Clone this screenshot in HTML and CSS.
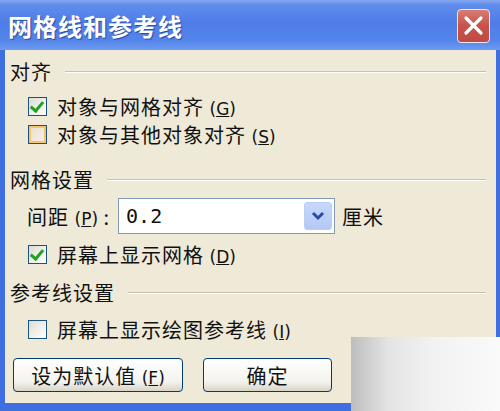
FILE: index.html
```html
<!DOCTYPE html>
<html lang="zh-CN">
<head>
    <meta charset="UTF-8">
    <title>网格线和参考线</title>
    <link rel="stylesheet" href="styles.css">
</head>
<body>

    <div class="window">
        <!-- Title bar -->
        <div class="titlebar">
            <span class="title">网格线和参考线</span>
            <div class="close-btn">
                <svg width="21" height="21" viewBox="0 0 21 21">
                    <path d="M3 3 L18 18 M18 3 L3 18" stroke="#fff" stroke-width="3.2" stroke-linecap="round"/>
                </svg>
            </div>
        </div>

        <!-- Client area -->
        <div class="client">
            <div class="group-head first">对齐</div>

            <div class="check-row row-a">
                <span class="box checked"></span>
                <span class="label">对象与网格对齐 <span class="key">(<u>G</u>)</span></span>
            </div>
            <div class="check-row row-b">
                <span class="box hover"></span>
                <span class="label">对象与其他对象对齐 <span class="key">(<u>S</u>)</span></span>
            </div>

            <div class="group-head second">网格设置</div>

            <div class="spacing-row">
                <span class="label">间距 <span class="key">(<u>P</u>)</span> :</span>
                <div class="combo">
                    <span class="combo-value">0.2</span>
                    <span class="combo-btn">
                        <svg width="16" height="12" viewBox="0 0 16 12">
                            <path d="M3 3 L8 8 L13 3" stroke="#2d4aa8" stroke-width="3" fill="none"/>
                        </svg>
                    </span>
                </div>
                <span class="unit">厘米</span>
            </div>

            <div class="check-row row-c">
                <span class="box checked"></span>
                <span class="label">屏幕上显示网格 <span class="key">(<u>D</u>)</span></span>
            </div>

            <div class="group-head third">参考线设置</div>

            <div class="check-row row-d">
                <span class="box"></span>
                <span class="label">屏幕上显示绘图参考线 <span class="key">(<u>I</u>)</span></span>
            </div>

            <div class="buttons">
                <button class="btn btn-default">设为默认值 <span class="key">(<u>F</u>)</span></button>
                <button class="btn btn-ok">确定</button>
            </div>
        </div>

        <!-- watermark smudge in the corner of the picture -->
        <div class="smudge"></div>
    </div>

</body>
</html>
```

FILE: styles.css
```css
/* Basic Reset */
html, body {
    margin: 0;
    padding: 0;
    width: 500px;
    height: 411px;
    overflow: hidden;
    font-family: "Noto Sans CJK SC", "Noto Sans", sans-serif;
}

/* Window frame */
.window {
    position: relative;
    width: 500px;
    height: 411px;
    box-sizing: border-box;
    display: flex;
    flex-direction: column;
    background: #3f6fe0;
}

/* Title bar */
.titlebar {
    height: 50px;
    flex: 0 0 50px;
    display: flex;
    align-items: center;
    justify-content: space-between;
    padding: 0 10px 0 8px;
    background: linear-gradient(180deg, #86a9f2 0%, #5f8cec 10%, #4f7de8 45%, #5284ea 80%, #6f9af0 100%);
}

.title {
    color: #fff;
    font-size: 24px;
    font-weight: bold;
    letter-spacing: 1px;
    text-shadow: 1px 1px 1px #2a4aa0;
}

.close-btn {
    width: 31px;
    height: 32px;
    margin-top: 1px;
    border: 1px solid #e8e8f4;
    border-radius: 4px;
    background: linear-gradient(180deg, #d87c74 0%, #c9524a 50%, #c04a44 100%);
    display: flex;
    align-items: center;
    justify-content: center;
}

/* Client area */
.client {
    flex: 1;
    margin: 0 4px 8px 5px;
    padding: 11px 10px 0 5px;
    background: #efe9d8;
    color: #111;
    font-size: 20px;
    letter-spacing: 1px;
}

.group-head {
    height: 22px;
    line-height: 22px;
    display: flex;
    align-items: center;
    gap: 13px;
}

.group-head::after {
    content: "";
    flex: 1;
    height: 1px;
    background: #c8c2ad;
    border-bottom: 1px solid #fff;
}

.group-head.second { margin-top: 24px; }
.group-head.third { margin-top: 17px; }

/* Checkbox rows */
.check-row {
    height: 22px;
    display: flex;
    align-items: center;
    padding-left: 18px;
}

.row-a { margin-top: 12px; }
.row-b { margin-top: 6px; }
.row-c { margin-top: 8px; }
.row-d { margin-top: 14px; }

.box {
    position: relative;
    width: 17px;
    height: 17px;
    border: 1px solid #1c5180;
    background: linear-gradient(135deg, #dcdcd6 0%, #f2f2ee 60%, #fff 100%);
    margin-right: 10px;
    flex: 0 0 auto;
}

.box.hover {
    box-shadow: inset 0 0 0 2px #f6c46a;
    background: linear-gradient(135deg, #e8e0d0 0%, #f6f0e6 100%);
}

.box.checked::after {
    content: "";
    position: absolute;
    left: 4px;
    top: 1px;
    width: 5px;
    height: 10px;
    border: solid #21a121;
    border-width: 0 3px 3px 0;
    transform: rotate(40deg);
}

.key {
    font-family: "DejaVu Sans", sans-serif;
    font-size: 17px;
    letter-spacing: 0;
}

/* Spacing combo row */
.spacing-row {
    margin-top: 6px;
    height: 38px;
    display: flex;
    align-items: center;
    padding-left: 17px;
}

.combo {
    width: 217px;
    height: 36px;
    margin-left: 8px;
    border: 1px solid #7f9db9;
    background: #fff;
    display: flex;
    align-items: center;
    justify-content: space-between;
    padding: 0 2px 0 7px;
    box-sizing: border-box;
}

.combo-value {
    font-family: "DejaVu Sans Mono", monospace;
    font-size: 20px;
    letter-spacing: 0;
}

.combo-btn {
    width: 28px;
    height: 28px;
    border-radius: 3px;
    background: linear-gradient(180deg, #c8d8fc 0%, #b4c8f6 100%);
    border: 1px solid #bccdf4;
    box-sizing: border-box;
    display: flex;
    align-items: center;
    justify-content: center;
}

.unit {
    margin-left: 7px;
}

/* Buttons */
.buttons {
    margin-top: 18px;
    display: flex;
    gap: 20px;
    padding-left: 3px;
}

.btn {
    height: 34px;
    border: 1px solid #003c74;
    border-radius: 4px;
    background: linear-gradient(180deg, #fefefe 0%, #f4f3ee 70%, #d8d5c8 100%);
    font-family: "Noto Sans CJK SC", sans-serif;
    font-size: 20px;
    letter-spacing: 1px;
    color: #111;
    padding: 0;
}

.btn-default { width: 170px; }
.btn-ok { width: 129px; }

/* light smudge over the corner */
.smudge {
    position: absolute;
    left: 351px;
    top: 337px;
    right: 0;
    bottom: 0;
    background: linear-gradient(90deg, #bdbdbd 0%, #e4e4e4 25%, #f2f2f2 55%, #fafafa 100%);
}
```
